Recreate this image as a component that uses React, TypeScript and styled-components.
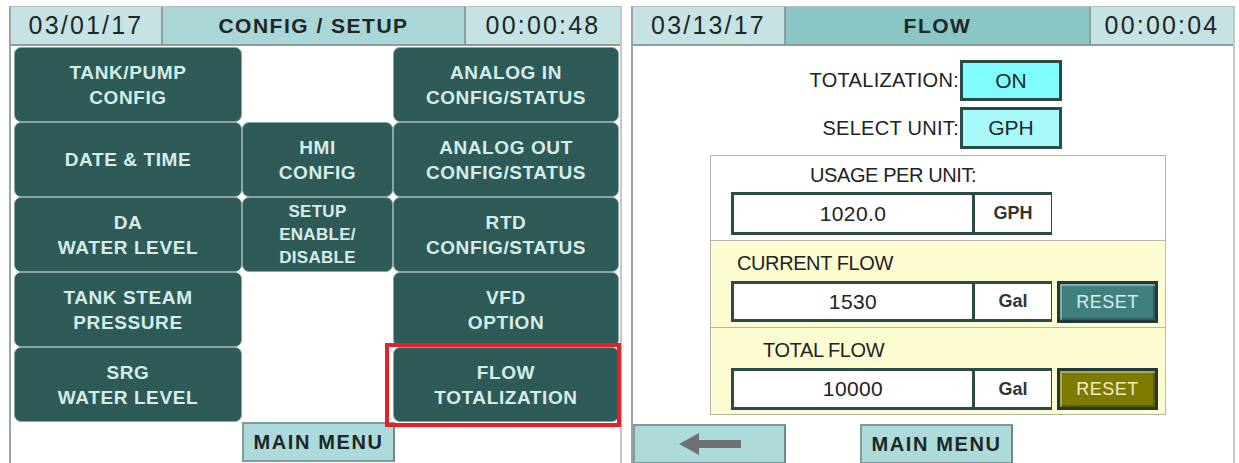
import React from "react";
import styled, { createGlobalStyle, css } from "styled-components";

const Global = createGlobalStyle`
  html, body { margin: 0; padding: 0; background: #ffffff; }
  body { font-family: "Liberation Sans", Arial, sans-serif; }
  * { box-sizing: border-box; }
`;

const Page = styled.div`
  display: flex;
  gap: 9px;
  padding: 6px 0 0 9px;
  width: 1239px;
  height: 463px;
  overflow: hidden;
`;

const Panel = styled.div<{ $w: number }>`
  width: ${(p) => p.$w}px;
  height: 470px;
  display: flex;
  flex-direction: column;
  border-left: 2px solid #9aa4a6;
  border-right: 2px solid #c4c8ca;
  border-top: 1px solid #b8bcbe;
`;

const Header = styled.div<{ $cols: string }>`
  display: grid;
  grid-template-columns: ${(p) => p.$cols};
  height: 39px;
  border-bottom: 2px solid #8e9c9c;
`;

const HeadCell = styled.div<{ $bg: string; $bold?: boolean }>`
  background: ${(p) => p.$bg};
  display: flex;
  align-items: center;
  justify-content: center;
  color: #1e2626;
  border-right: 2px solid #8e9c9c;
  font-size: ${(p) => (p.$bold ? "21px" : "25px")};
  font-weight: ${(p) => (p.$bold ? 700 : 400)};
  letter-spacing: ${(p) => (p.$bold ? "1.5px" : "2.2px")};
  &:last-child { border-right: none; }
`;

const MenuGrid = styled.div`
  display: grid;
  grid-template-columns: 228px 151px 226px;
  grid-template-rows: repeat(5, 75px) 42px;
  padding: 1px 0 0 3px;
`;

const MenuButton = styled.div<{ $col: number; $row: number; $small?: boolean }>`
  grid-column: ${(p) => p.$col};
  grid-row: ${(p) => p.$row};
  position: relative;
  background: #2e5a57;
  border: 1px solid #8aa6a2;
  border-radius: 7px;
  display: flex;
  align-items: center;
  justify-content: center;
  text-align: center;
  color: #d6ece7;
  font-weight: 700;
  white-space: pre-line;
  ${(p) =>
    p.$small
      ? css`
          font-size: 17px;
          line-height: 23px;
          letter-spacing: 0.3px;
        `
      : css`
          font-size: 19px;
          line-height: 25px;
          letter-spacing: 0.6px;
        `}
`;

const Highlight = styled.div`
  position: absolute;
  inset: -5px -3px -6px -9px;
  border: 4px solid #e2212b;
  pointer-events: none;
`;

const NavButton = styled.div<{ $col?: number; $row?: number }>`
  ${(p) =>
    p.$col
      ? css`
          grid-column: ${p.$col};
          grid-row: ${p.$row};
        `
      : ""}
  width: 153px;
  height: 40px;
  background: #acd9d9;
  border: 2px solid #7f9c9c;
  border-right-color: #6f8888;
  display: flex;
  align-items: center;
  justify-content: center;
  color: #1c2828;
  font-weight: 700;
  font-size: 20px;
  letter-spacing: 1.6px;
`;

const FlowBody = styled.div`
  display: flex;
  flex-direction: column;
  padding-top: 14px;
`;

const SettingRow = styled.div`
  display: grid;
  grid-template-columns: 327px 102px;
  align-items: center;
  margin-bottom: 6px;
`;

const SettingLabel = styled.div`
  text-align: right;
  font-size: 20px;
  letter-spacing: 0.3px;
  color: #222;
  padding-right: 1px;
`;

const SettingBox = styled.div<{ $bg: string; $h: number }>`
  height: ${(p) => p.$h}px;
  background: ${(p) => p.$bg};
  border: 3px solid #2c4a48;
  display: flex;
  align-items: center;
  justify-content: center;
  font-size: 21px;
  color: #1e2a2a;
`;

const Section = styled.div<{ $bg: string; $h: number }>`
  margin-left: 77px;
  width: 456px;
  height: ${(p) => p.$h}px;
  background: ${(p) => p.$bg};
  border: 1px solid #b4b4ac;
  border-top-width: ${(p) => (p.$bg === "#ffffff" ? 1 : 0)}px;
  border-bottom-width: 1px;
  display: flex;
  flex-direction: column;
  padding-left: 20px;
`;

const SectionLabel = styled.div<{ $indent: number; $top: number }>`
  margin: ${(p) => p.$top}px 0 0 ${(p) => p.$indent}px;
  height: 20px;
  line-height: 20px;
  font-size: 20px;
  letter-spacing: -0.4px;
  color: #222;
`;

const FieldRow = styled.div<{ $top: number }>`
  display: flex;
  align-items: flex-start;
  gap: 5px;
  margin-top: ${(p) => p.$top}px;
`;

const Field = styled.div<{ $h: number }>`
  display: grid;
  grid-template-columns: 238px 76px;
  width: 321px;
  height: ${(p) => p.$h}px;
  border: 3px solid #2c4a48;
  background: #2c4a48;
  gap: 3px;
`;

const FieldCell = styled.div`
  background: #ffffff;
  display: flex;
  align-items: center;
  justify-content: center;
  font-size: 21px;
  letter-spacing: 0.4px;
  color: #222;
`;

const UnitCell = styled(FieldCell)`
  font-size: 18px;
  letter-spacing: 0;
  font-weight: 700;
  color: #333;
`;

const ResetButton = styled.div<{ $bg: string; $fg: string }>`
  width: 101px;
  height: 42px;
  border: 3px solid #1f3a38;
  background: ${(p) => p.$bg};
  box-shadow: inset 2px 2px 0 rgba(255, 255, 255, 0.35), inset -2px -2px 0 rgba(0, 0, 0, 0.25);
  display: flex;
  align-items: center;
  justify-content: center;
  color: ${(p) => p.$fg};
  font-size: 18px;
  letter-spacing: 0.5px;
`;

const BottomBar = styled.div`
  display: flex;
  gap: 74px;
  margin-top: 9px;
`;

const ArrowIcon = () => (
  <svg width="62" height="22" viewBox="0 0 62 22">
    <polygon points="0,11 20,0 20,7 62,7 62,15 20,15 20,22" fill="#6f7272" />
  </svg>
);

const menuItems: { label: string; col: number; row: number; small?: boolean; hl?: boolean }[] = [
  { label: "TANK/PUMP\nCONFIG", col: 1, row: 1 },
  { label: "DATE & TIME", col: 1, row: 2 },
  { label: "DA\nWATER LEVEL", col: 1, row: 3 },
  { label: "TANK STEAM\nPRESSURE", col: 1, row: 4 },
  { label: "SRG\nWATER LEVEL", col: 1, row: 5 },
  { label: "HMI\nCONFIG", col: 2, row: 2 },
  { label: "SETUP\nENABLE/\nDISABLE", col: 2, row: 3, small: true },
  { label: "ANALOG IN\nCONFIG/STATUS", col: 3, row: 1 },
  { label: "ANALOG OUT\nCONFIG/STATUS", col: 3, row: 2 },
  { label: "RTD\nCONFIG/STATUS", col: 3, row: 3 },
  { label: "VFD\nOPTION", col: 3, row: 4 },
  { label: "FLOW\nTOTALIZATION", col: 3, row: 5, hl: true },
];

export default function App() {
  return (
    <>
      <Global />
      <Page>
        <Panel $w={613}>
          <Header $cols="152px 303px 1fr">
            <HeadCell $bg="#c6e3e3">03/01/17</HeadCell>
            <HeadCell $bg="#a9d6d6" $bold>
              CONFIG / SETUP
            </HeadCell>
            <HeadCell $bg="#c6e3e3">00:00:48</HeadCell>
          </Header>
          <MenuGrid>
            {menuItems.map((m) => (
              <MenuButton key={m.label} $col={m.col} $row={m.row} $small={m.small}>
                {m.label}
                {m.hl && <Highlight />}
              </MenuButton>
            ))}
            <NavButton $col={2} $row={6}>MAIN MENU</NavButton>
          </MenuGrid>
        </Panel>
        <Panel $w={604}>
          <Header $cols="153px 305px 1fr">
            <HeadCell $bg="#c6e3e3">03/13/17</HeadCell>
            <HeadCell $bg="#8bc6c6" $bold>
              FLOW
            </HeadCell>
            <HeadCell $bg="#c6e3e3">00:00:04</HeadCell>
          </Header>
          <FlowBody>
            <SettingRow>
              <SettingLabel>TOTALIZATION:</SettingLabel>
              <SettingBox $bg="#80fcfc" $h={41}>ON</SettingBox>
            </SettingRow>
            <SettingRow>
              <SettingLabel>SELECT UNIT:</SettingLabel>
              <SettingBox $bg="#a8fafa" $h={42}>GPH</SettingBox>
            </SettingRow>
            <Section $bg="#ffffff" $h={86}>
              <SectionLabel $indent={79} $top={9}>USAGE PER UNIT:</SectionLabel>
              <FieldRow $top={7}>
                <Field $h={43}>
                  <FieldCell>1020.0</FieldCell>
                  <UnitCell>GPH</UnitCell>
                </Field>
              </FieldRow>
            </Section>
            <Section $bg="#fefdd2" $h={87}>
              <SectionLabel $indent={6} $top={12}>CURRENT FLOW</SectionLabel>
              <FieldRow $top={8}>
                <Field $h={41}>
                  <FieldCell>1530</FieldCell>
                  <UnitCell>Gal</UnitCell>
                </Field>
                <ResetButton $bg="#3f807d" $fg="#d7efec">RESET</ResetButton>
              </FieldRow>
            </Section>
            <Section $bg="#fefdd2" $h={87}>
              <SectionLabel $indent={32} $top={12}>TOTAL FLOW</SectionLabel>
              <FieldRow $top={8}>
                <Field $h={42}>
                  <FieldCell>10000</FieldCell>
                  <UnitCell>Gal</UnitCell>
                </Field>
                <ResetButton $bg="#7d7a00" $fg="#f1efc4">RESET</ResetButton>
              </FieldRow>
            </Section>
            <BottomBar>
              <NavButton>
                <ArrowIcon />
              </NavButton>
              <NavButton>MAIN MENU</NavButton>
            </BottomBar>
          </FlowBody>
        </Panel>
      </Page>
    </>
  );
}
